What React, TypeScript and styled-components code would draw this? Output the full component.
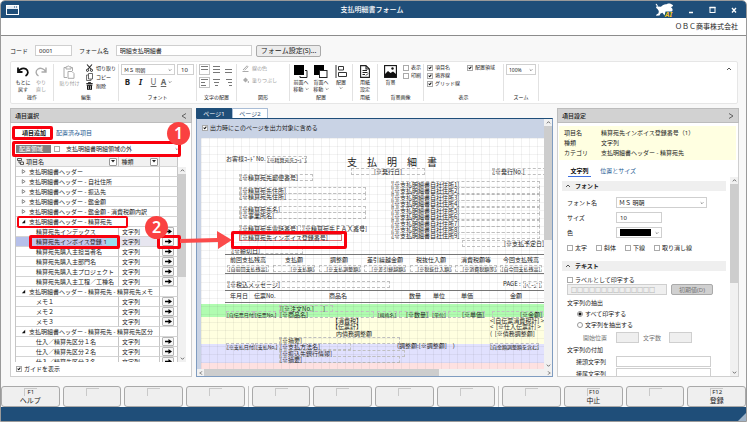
import React from "react";
import styled, { createGlobalStyle, css } from "styled-components";

const GlobalStyle = createGlobalStyle`
  *, *::before, *::after { box-sizing: border-box; }
  html, body { margin: 0; }
  body, button, input, select, table {
    font-family: "Noto Sans", "Noto Sans CJK JP", sans-serif;
    font-size: 6px;
    line-height: 8px;
    color: #222;
  }
  button, input, select { margin: 0; padding: 0; }
`;

/* ---------- window frame ---------- */

const Window = styled.div`
  position: relative;
  display: flex;
  flex-direction: column;
  height: 100vh;
  overflow: hidden;
  border: 1px solid #9a9a9a;
  border-radius: 5px 5px 0 0;
  background: #f8f8f8;
  white-space: nowrap;
`;

const TitleBar = styled.header`
  display: grid;
  grid-template-columns: 1fr auto 1fr;
  align-items: center;
  flex: none;
  height: 17px;
  padding: 0 8px 0 5px;
  background: #1f4e79;
  color: #fff;
`;

const Title = styled.h1`
  margin: 0;
  font-size: 7px;
  line-height: 10px;
  font-weight: 500;
`;

const WindowButtons = styled.div`
  display: flex;
  align-items: center;
  justify-content: flex-end;
  gap: 13px;
`;

const WindowButton = styled.button`
  display: flex;
  width: 8px;
  height: 8px;
  border: 0;
  background: none;
`;

const CompanyBar = styled.div`
  flex: none;
  height: 18px;
  padding: 0 8px;
  border-bottom: 1px solid #8c8c8c;
  background: #fff;
  font-size: 7px;
  line-height: 17px;
  text-align: right;
`;

const Footer = styled.footer`
  display: flex;
  align-items: flex-end;
  justify-content: flex-end;
  flex: none;
  height: 14px;
  background: #1f4e79;
`;

/* ---------- shared controls ---------- */

const TextInput = styled.input<{ $w?: number }>`
  width: ${(p) => (p.$w ? `${p.$w}px` : "100%")};
  height: 11px;
  padding: 0 3px;
  border: 1px solid #cfcfcf;
  background: #fff;
  &:disabled {
    background: #efefef;
    color: #777;
  }
`;

const SelectBox = styled.span<{ $w: number; $small?: boolean }>`
  display: grid;
  align-items: center;
  width: ${(p) => p.$w}px;
  height: 11px;
  border: 1px solid #cfcfcf;
  background: #fff;
  > select {
    grid-area: 1 / 1;
    width: 100%;
    height: 9px;
    padding: 0 2px;
    border: 0;
    appearance: none;
    background: transparent;
    font-size: ${(p) => (p.$small ? 5 : 6)}px;
  }
  > svg {
    grid-area: 1 / 1;
    justify-self: end;
    margin-right: 2px;
    pointer-events: none;
  }
`;

const Check = styled.label<{ $small?: boolean }>`
  display: inline-flex;
  align-items: center;
  gap: 2px;
  font-size: ${(p) => (p.$small ? 5 : 6)}px;
`;

const Tick = styled.input.attrs({ type: "checkbox" })`
  position: relative;
  flex: none;
  width: 6px;
  height: 6px;
  appearance: none;
  border: 1px solid #aaa;
  background: #fff;
  &:checked::after {
    content: "";
    position: absolute;
    left: 1px;
    top: 0;
    width: 2px;
    height: 3px;
    border: solid #111;
    border-width: 0 1px 1px 0;
    transform: rotate(40deg);
  }
`;

const Radio = styled.input.attrs({ type: "radio" })`
  flex: none;
  width: 6px;
  height: 6px;
  appearance: none;
  border: 1px solid #999;
  border-radius: 50%;
  background: #fff;
  &:checked {
    background: radial-gradient(circle, #111 1px, #fff 2px);
  }
`;

const Chevron = ({ up, size = 4 }: { up?: boolean; size?: number }) => (
  <svg width={size} height={size} viewBox="0 0 6 6" aria-hidden="true">
    <path d={up ? "M1 4L3 2L5 4" : "M1 2L3 4L5 2"} fill="none" stroke="#555" strokeWidth="1" />
  </svg>
);

/* ---------- form name row ---------- */

const FormRow = styled.div`
  display: flex;
  align-items: center;
  flex: none;
  height: 24px;
  padding: 5px 9px 0;
  gap: 7px;
`;

const FormButton = styled.button`
  height: 12px;
  padding: 0 4px;
  margin-left: -3px;
  border: 1px solid #aaa;
  border-radius: 2px;
  background: #ececec;
  font-size: 7px;
`;

/* ---------- ribbon ---------- */

const Ribbon = styled.div`
  display: flex;
  flex: none;
  height: 43px;
  margin: 1px 8px 0 9px;
  padding: 2px 0;
  border: 1px solid #e6e6e6;
  border-radius: 2px;
  background: #fff;
  font-size: 5px;
  line-height: 7px;
`;

const Group = styled.section<{ $w: number }>`
  display: flex;
  flex-direction: column;
  flex: none;
  width: ${(p) => p.$w}px;
  border-right: 1px solid #e2e2e2;
`;

const GroupBody = styled.div<{ $gap?: number; $pad?: number }>`
  display: flex;
  flex: 1;
  min-height: 0;
  gap: ${(p) => p.$gap ?? 0}px;
  padding: 0 ${(p) => p.$pad ?? 2}px;
  font-size: 5px;
`;

const GroupName = styled.div`
  flex: none;
  height: 8px;
  text-align: center;
  line-height: 8px;
`;

const BigButton = styled.button`
  display: flex;
  flex-direction: column;
  align-items: center;
  flex: 1;
  padding-top: 1px;
  border: 0;
  background: none;
  font-size: 5px;
  line-height: 7px;
  &:disabled { color: #999; }
  > svg { flex: none; margin-bottom: 1px; }
`;

const Stack = styled.div<{ $gap?: number; $pad?: number }>`
  display: flex;
  flex-direction: column;
  align-items: flex-start;
  gap: ${(p) => p.$gap ?? 2}px;
  padding-top: ${(p) => p.$pad ?? 0}px;
`;

const Line = styled.div<{ $gap?: number }>`
  display: flex;
  align-items: center;
  gap: ${(p) => p.$gap ?? 2}px;
`;

const SmallButton = styled.button<{ $boxed?: boolean }>`
  display: flex;
  align-items: center;
  gap: 3px;
  border: ${(p) => (p.$boxed ? "1px solid #c4c4c4" : "0")};
  background: none;
  font-size: 5px;
  line-height: 7px;
  &:disabled { color: #999; }
`;

const FontButton = styled.button`
  display: flex;
  align-items: center;
  justify-content: center;
  gap: 2px;
  width: 13px;
  border: 0;
  background: none;
  font-size: 8px;
  line-height: 10px;
  > i { font-weight: 700; }
  > u { color: #666; }
`;

const AlignButton = styled.button<{ $on?: boolean }>`
  display: flex;
  align-items: center;
  justify-content: center;
  width: 11px;
  height: 11px;
  border: 1px solid ${(p) => (p.$on ? "#c4c4c4" : "transparent")};
  background: none;
`;

const CollapseButton = styled.button`
  display: flex;
  margin: 2px 5px 0 auto;
  height: 6px;
  border: 0;
  background: none;
`;

const AlignIcon = ({ rows }: { rows: [number, number][] }) => (
  <svg width="9" height="9" viewBox="0 0 9 9" aria-hidden="true">
    {rows.map(([x, w], i) => (
      <rect key={i} x={x} y={1 + i * 3} width={w} height="1" fill="#777" />
    ))}
  </svg>
);

/* ---------- main area ---------- */

const Main = styled.main`
  display: flex;
  flex: 1;
  min-height: 0;
  gap: 4px;
  padding: 4px 7px 9px 9px;
`;

const Panel = styled.section`
  display: flex;
  flex-direction: column;
  flex: none;
  width: 182px;
  min-height: 0;
  border: 1px solid #cfcfcf;
  background: #fff;
`;

const PanelHeader = styled.h2`
  display: flex;
  align-items: center;
  justify-content: space-between;
  flex: none;
  height: 15px;
  margin: -1px -1px 0;
  padding: 0 4px;
  border: 1px solid #bcbcbc;
  background: #d2d2d2;
  font-size: 6px;
  font-weight: 500;
`;

const TabRow = styled.nav`
  display: flex;
  flex: none;
  gap: 8px;
  padding: 5px 10px 0;
`;

const TextTab = styled.button<{ $on?: boolean }>`
  height: 11px;
  padding: 0 1px;
  border: 0;
  border-bottom: 1px solid ${(p) => (p.$on ? "#3d6fe0" : "transparent")};
  background: none;
  color: ${(p) => (p.$on ? "#111" : "#1f5c94")};
  font-weight: ${(p) => (p.$on ? 700 : 400)};
`;

const AreaRow = styled.div`
  display: flex;
  align-items: center;
  flex: none;
  gap: 3px;
  height: 9px;
  margin: 5px 12px 3px 5px;
`;

const AreaTag = styled.label`
  width: 35px;
  padding: 0 3px;
  background: #808080;
  color: #fff;
`;

const AreaSelect = styled.span`
  display: grid;
  align-items: center;
  flex: 1;
  > select {
    grid-area: 1 / 1;
    border: 0;
    padding-left: 3px;
    appearance: none;
    background: none;
  }
  > svg { grid-area: 1 / 1; justify-self: end; pointer-events: none; }
`;

const ListArea = styled.div`
  display: flex;
  flex: 1;
  min-height: 0;
  margin: 0 5px 0 4px;
`;

const ListClip = styled.div`
  flex: 1;
  min-width: 0;
  overflow: hidden;
`;

const ListScroll = styled.div`
  display: flex;
  padding-top: 11px;
`;

const ItemTable = styled.table`
  width: 100%;
  table-layout: fixed;
  border-collapse: separate;
  border-spacing: 0;
  border-left: 1px solid #c6c6c6;
  th, td {
    height: 10px;
    padding: 0;
    overflow: hidden;
    border-right: 1px solid #c6c6c6;
    border-bottom: 1px solid #d4d4d4;
    text-align: left;
    font-weight: 400;
    line-height: 8px;
  }
  th { border-top: 1px solid #c6c6c6; height: 11px; background: #f1f1f1; }
`;

const HeadCell = styled.div`
  display: flex;
  align-items: center;
  gap: 2px;
  padding: 0 1px;
`;

const FilterButton = styled.button`
  display: flex;
  align-items: center;
  justify-content: center;
  width: 8px;
  height: 8px;
  margin-left: auto;
  border: 1px solid #999;
  border-radius: 1px;
  background: #fff;
`;

const GroupCell = styled.td`
  > span { display: flex; align-items: center; gap: 3px; padding-left: 5px; }
`;

const NameCell = styled.td<{ $on?: boolean }>`
  && {
    padding-left: 20px;
    ${(p) => p.$on && css`background: linear-gradient(90deg, #b6c0ea 0 15px, #c3c5ea 15px 90px, #98def0 90px);`}
  }
`;

const TypeCell = styled.td<{ $on?: boolean }>`
  && {
    padding-left: 3px;
    ${(p) => p.$on && css`background: #e7e6f0;`}
  }
`;

const PlaceButton = styled.button`
  display: flex;
  align-items: center;
  justify-content: center;
  width: 12px;
  height: 9px;
  margin-left: 2px;
  border: 1px solid #b5b5b5;
  border-radius: 1px;
  background: #f6f6f6;
`;

const ScrollTrack = styled.div<{ $across?: boolean }>`
  display: flex;
  flex: none;
  flex-direction: ${(p) => (p.$across ? "row" : "column")};
  align-items: center;
  ${(p) => (p.$across ? "height: 7px;" : "width: 8px;")}
  background: #f1f1f1;
`;

const ScrollThumb = styled.div<{ $across?: boolean; $share: number }>`
  ${(p) => (p.$across ? "height: 100%;" : "width: 100%;")}
  flex: ${(p) => p.$share} 1 0;
  background: #cdcdcd;
`;

const ScrollRest = styled.div<{ $share: number }>`
  flex: ${(p) => p.$share} 1 0;
`;

const ScrollEnd = styled.span`
  display: flex;
  align-items: center;
  justify-content: center;
  flex: none;
  width: 7px;
  height: 7px;
`;

const SideArrow = ({ right, size = 4 }: { right?: boolean; size?: number }) => (
  <svg width={size} height={size} viewBox="0 0 6 6" aria-hidden="true">
    <path d={right ? "M1 0.5L5 3L1 5.5" : "M5 0.5L1 3L5 5.5"} fill="none" stroke="#555" strokeWidth="0.9" />
  </svg>
);

const ScrollBar = ({ across, share, rest }: { across?: boolean; share: number; rest: number }) => (
  <ScrollTrack $across={across}>
    <ScrollEnd>{across ? <SideArrow /> : <Chevron up size={5} />}</ScrollEnd>
    <ScrollThumb $across={across} $share={share} />
    <ScrollRest $share={rest} />
    <ScrollEnd>{across ? <SideArrow right /> : <Chevron size={5} />}</ScrollEnd>
  </ScrollTrack>
);

const GuideRow = styled.div`
  flex: none;
  height: 14px;
  padding: 3px 5px;
`;

/* ---------- page designer ---------- */

const Designer = styled.section`
  display: flex;
  flex: 1;
  flex-direction: column;
  min-width: 0;
`;

const PageTabs = styled.nav`
  display: flex;
  flex: none;
`;

const PageTab = styled.button<{ $on?: boolean }>`
  width: 36px;
  height: 10px;
  border: 1px solid ${(p) => (p.$on ? "#1f4e79" : "#a9bdd6")};
  border-bottom: 0;
  border-radius: 1px 1px 0 0;
  background: ${(p) => (p.$on ? "#1f4e79" : "#fff")};
  color: ${(p) => (p.$on ? "#fff" : "#1f4e79")};
`;

const DesignFrame = styled.div`
  display: flex;
  flex: 1;
  flex-direction: column;
  min-height: 0;
  border: 1px solid #7f9cc0;
  border-top-color: #1f4e79;
  background: #c9d3e5;
`;

const DesignRow = styled.div`
  display: flex;
  flex: 1;
  min-height: 0;
`;

const DesignView = styled.div`
  display: flex;
  flex: 1;
  flex-direction: column;
  min-width: 0;
  padding-left: 4px;
  overflow: hidden;
`;

const OutputRow = styled.div`
  flex: none;
  height: 19px;
  padding: 5px 1px;
`;

const Paper = styled.div`
  position: relative;
  flex: 1;
  min-height: 0;
  overflow: hidden;
  background: #fff;
  font-size: 5px;
  &::after {
    content: "";
    position: absolute;
    inset: 0;
    background-image:
      linear-gradient(90deg, rgba(90, 90, 90, 0.08) 1px, transparent 1px),
      linear-gradient(rgba(90, 90, 90, 0.08) 1px, transparent 1px);
    background-size: 8px 8px;
    pointer-events: none;
  }
`;

const Zone = styled.div<{ $y: number; $h: number; $c: string }>`
  position: absolute;
  left: 0;
  right: 0;
  top: ${(p) => p.$y}px;
  height: ${(p) => p.$h}px;
  background: ${(p) => p.$c};
`;

const Rule = styled.div<{ $y: number }>`
  position: absolute;
  left: 24px;
  right: 0;
  top: ${(p) => p.$y}px;
  height: 1px;
  background: #777;
`;

type FieldProps = { $x: number; $y: number; $w: number; $box?: boolean; $at?: string; $s?: number };

const Field = styled.div<FieldProps>`
  position: absolute;
  display: flex;
  align-items: center;
  justify-content: ${(p) => p.$at ?? "flex-start"};
  left: ${(p) => p.$x}px;
  top: ${(p) => p.$y - (p.$box ? 3 : 4)}px;
  width: ${(p) => p.$w}px;
  height: ${(p) => (p.$box ? 7 : 8)}px;
  border: ${(p) => (p.$box ? "1px dashed #c0c0c0" : "0")};
  font-family: "Noto Sans CJK JP", sans-serif;
  font-size: ${(p) => p.$s ?? 6}px;
  line-height: 6px;
  white-space: pre;
`;

const Selected = styled(Field)`
  border: 1px solid #e07070;
`;

/* x, centre y, width, text, boxed, alignment, size */
type Item = [number, number, number, string, boolean?, string?, number?];

const items: Item[] = [
  [25, 21, 42, "お客様ｺｰﾄﾞNo.", false, "flex-start", 6],
  [66, 21, 40, "[※精算宛先ｺｰﾄﾞ]", true, "center", 5],
  [146, 24, 100, "支　払　明　細　書", false, "flex-start", 10],
  [150, 33, 74, "[※発行日]", true, "center"],
  [291, 33, 54, "[※発行No.]", true],
  [38, 39, 74, "[※精算宛先郵便番号]", true],
  [38, 52, 127, "[※精算宛先住所]", true],
  [38, 58, 127, "[※精算宛先住所]", true],
  [38, 71, 127, "[※精算宛先名]", true],
  [38, 77, 127, "[※事業所名]", true],
  [38, 90, 62, "[※精算宛先電話番号]", true],
  [101, 90, 62, "[※精算宛先ＦＡＸ番号]", true],
  [30, 112, 72, "[※締切日]", true],
  ...[46, 52, 59, 65, 72, 78, 85, 91, 97].map(
    (y, i): Item => [190, y, 149, `[※支払明細書自社住所${i + 1}]`, true],
  ),
  [261, 105, 83, "[※支払予定日]", true, "flex-end"],
  [24, 122, 46, "前回支払残高", false, "center"],
  [72, 122, 42, "支払額", false, "center"],
  [117, 122, 42, "調整額", false, "center"],
  [163, 122, 42, "差引繰越金額", false, "center"],
  [208, 122, 44, "税抜仕入額", false, "center"],
  [254, 122, 42, "消費税額等", false, "center"],
  [299, 122, 42, "今回支払残高", false, "center"],
  [26, 130, 42, "[自前回支払残高]", true, "center", 5],
  [72, 130, 42, "[※支払額]", true, "flex-end", 5],
  [118, 130, 42, "[※支払調整額]", true, "flex-end", 5],
  [163, 130, 42, "[※差引繰越額]", true, "flex-end", 5],
  [209, 130, 42, "[※税抜仕入額]", true, "flex-end", 5],
  [254, 130, 42, "[※消費税額等]", true, "flex-end", 5],
  [299, 130, 42, "[自今回支払残高]", true, "center", 5],
  [26, 146, 163, "[※税込メッセージ]", true],
  [302, 146, 20, "PAGE :"],
  [322, 146, 19, "[ﾍﾟｰｼﾞ]", true, "center", 5],
  [29, 158, 20, "年月日"],
  [53, 158, 22, "伝票No."],
  [128, 158, 20, "商品名"],
  [208, 158, 14, "数量"],
  [232, 158, 14, "単位"],
  [260, 158, 14, "単価"],
  [309, 158, 14, "金額"],
  [78, 170, 54, "[[※注文No.]       ]", true],
  [25, 176, 28, "[自伝票日付]", true, "flex-start", 5],
  [53, 176, 22, "[伝票No.]", true, "flex-start", 5],
  [78, 176, 95, "[※商品名]", true],
  [176, 176, 20, "[規格名]", true, "center", 5],
  [198, 176, 30, "[※数量]", true, "flex-end"],
  [231, 176, 14, "[単位]", true, "center", 5],
  [247, 176, 37, "[※単価]", true, "flex-end"],
  [291, 176, 51, "[※金額]", true, "flex-end"],
  [131, 183, 30, "【消費税】"],
  [131, 189, 30, "【伝票計】"],
  [135, 196, 40, "内債務調整額"],
  [289, 183, 54, "<[自伝票消費税計] >", false, "flex-start"],
  [289, 189, 54, "<  [※仕入伝票計] >", false, "flex-start"],
  [289, 196, 54, "(  [※債務調整額]", false, "flex-start"],
  [78, 202, 121, "[※摘要]", true],
  [25, 208, 28, "[※支払日付]", true, "flex-start", 5],
  [54, 208, 22, "[支払No.]", true, "flex-start", 5],
  [78, 208, 72, "[※支払方法名]", true],
  [196, 208, 62, "(調整額:[※調整額]　)"],
  [289, 208, 49, "[自金額調整額を含む]", true, "center", 5],
  [78, 215, 126, "[※振込先銀行情報]", true],
  [78, 221, 121, "[※摘要]", true],
];

/* ---------- property panel ---------- */

const InfoList = styled.dl`
  display: grid;
  grid-template-columns: 37px 1fr;
  flex: none;
  row-gap: 2px;
  margin: 3px 2px 1px 1px;
  padding: 3px 5px;
  background: #ffffe1;
  dt, dd { margin: 0; }
`;

const PropertyBody = styled.div`
  display: flex;
  flex: 1;
  min-height: 0;
`;

const PropertyScroll = styled.div`
  flex: 1;
  min-width: 0;
  padding: 4px 4px 0;
  overflow: hidden;
`;

const SectionTitle = styled.h3<{ $after?: boolean }>`
  display: flex;
  align-items: center;
  gap: 4px;
  height: 10px;
  margin: ${(p) => (p.$after ? 6 : 0)}px 0 4px;
  padding: 0 3px;
  background: #efefef;
  font-size: 6px;
  font-weight: 700;
`;

const PropertyRow = styled.div<{ $h?: number; $in?: number; $muted?: boolean }>`
  display: flex;
  align-items: center;
  height: ${(p) => p.$h ?? 15}px;
  padding-left: ${(p) => p.$in ?? 5}px;
  gap: 4px;
  ${(p) => p.$muted && "color: #777;"}
`;

const PropertyLabel = styled.label<{ $w: number }>`
  width: ${(p) => p.$w}px;
`;

const CheckRow = styled(PropertyRow)`
  gap: 9px;
`;

const ColorButton = styled.button`
  display: flex;
  align-items: center;
  justify-content: space-between;
  width: 46px;
  height: 11px;
  padding: 0 2px 0 3px;
  border: 1px solid #cfcfcf;
  background: #fff;
`;

const Swatch = styled.span`
  width: 31px;
  height: 7px;
  background: #000;
`;

const DefaultButton = styled.button`
  width: 42px;
  height: 11px;
  border: 1px solid #aaa;
  border-radius: 2px;
  background: #d0d0d0;
  color: #777;
`;

/* ---------- function keys ---------- */

const KeyBar = styled.div`
  display: flex;
  flex: none;
  gap: 3px;
  height: 21px;
`;

const KeyDivider = styled.span`
  width: 1px;
  background: #c4c4c4;
`;

const KeyButton = styled.button`
  display: flex;
  flex: 1 1 0;
  flex-direction: column;
  align-items: center;
  padding-top: 1px;
  border: 1px solid #a9a9a9;
  border-radius: 3px;
  background: #efefef;
  font-size: 7px;
  line-height: 10px;
`;

const KeyCode = styled.span`
  width: 13px;
  height: 8px;
  border: solid #c9c9c9;
  border-width: 1px 0 0 1px;
  font-size: 6px;
  line-height: 7px;
`;

/* ---------- callouts ---------- */

const Callout = styled.div<{ $x: number; $y: number; $w: number; $h: number; $b?: number }>`
  position: absolute;
  left: ${(p) => p.$x}px;
  top: ${(p) => p.$y}px;
  width: ${(p) => p.$w}px;
  height: ${(p) => p.$h}px;
  border: ${(p) => p.$b ?? 3}px solid #f9000d;
  border-radius: 2px;
  pointer-events: none;
`;

const Badge = styled.div<{ $x: number; $y: number }>`
  position: absolute;
  left: ${(p) => p.$x}px;
  top: ${(p) => p.$y}px;
  width: 23px;
  height: 23px;
  border-radius: 50%;
  background: #fa4141;
  color: #fff;
  font-family: "Noto Sans", sans-serif;
  font-size: 16px;
  font-weight: 600;
  line-height: 23px;
  text-align: center;
  pointer-events: none;
`;

const PointerArrow = styled.svg`
  position: absolute;
  left: 179px;
  top: 228px;
  pointer-events: none;
`;

/* ---------- data ---------- */

type Row = { group?: boolean; open?: boolean; name: string; on?: boolean };

const rows: Row[] = [
  { group: true, name: "支払明細書ヘッダー" },
  { group: true, name: "支払明細書ヘッダー - 自社住所" },
  { group: true, name: "支払明細書ヘッダー - 振込先" },
  { group: true, name: "支払明細書ヘッダー - 鑑金額" },
  { group: true, name: "支払明細書ヘッダー - 鑑金額 - 消費税額内訳" },
  { group: true, open: true, name: "支払明細書ヘッダー - 精算宛先" },
  { name: "精算宛先インデックス" },
  { name: "精算宛先インボイス登録  1", on: true },
  { name: "精算宛先購入主担当者名" },
  { name: "精算宛先購入主部門名" },
  { name: "精算宛先購入主プロジェクト" },
  { name: "精算宛先購入主工程／工種名" },
  { group: true, open: true, name: "支払明細書ヘッダー - 精算宛先 - 精算宛先メモ" },
  { name: "メモ１" },
  { name: "メモ２" },
  { name: "メモ３" },
  { group: true, open: true, name: "支払明細書ヘッダー - 精算宛先 - 精算宛先区分" },
  { name: "仕入／精算先区分１名" },
  { name: "仕入／精算先区分２名" },
  { name: "仕入／精算先区分３名" },
];

const keyGroups: { code?: string; name?: string }[][] = [
  [{ code: "F1", name: "ヘルプ" }, {}, {}, {}],
  [{}, {}, {}, {}],
  [{}, { code: "F10", name: "中止" }, {}, { code: "F12", name: "登録" }],
];

const Expander = ({ open }: { open?: boolean }) => (
  <svg width="5" height="5" viewBox="0 0 6 6" aria-hidden="true">
    {open ? <path d="M5 1V5H1Z" fill="#111" /> : <path d="M1.5 0.8L5 3L1.5 5.2Z" fill="#fff" stroke="#666" strokeWidth="0.9" />}
  </svg>
);

const DownTriangle = () => (
  <svg width="4" height="3" viewBox="0 0 4 3" aria-hidden="true"><path d="M0 0H4L2 2.5Z" fill="#222" /></svg>
);

/* ---------- sections ---------- */

const RibbonBar = () => (
  <Ribbon>
    <Group $w={43}>
      <GroupBody $pad={3}>
        <BigButton>
          <svg width="14" height="13" viewBox="0 0 14 13"><path d="M2 2.5V7H6.5M2.2 6.8C4 3.5 7.5 2.5 10 4C13 6 12.2 9.5 9.5 11" fill="none" stroke="#111" strokeWidth="1.8" /></svg>
          <span>もとに<br />戻す</span>
        </BigButton>
        <BigButton disabled>
          <svg width="14" height="13" viewBox="0 0 14 13"><path d="M12 2.5V7H7.5M11.8 6.8C10 3.5 6.5 2.5 4 4C1 6 1.8 9.5 4.5 11" fill="none" stroke="#aaa" strokeWidth="1.4" /></svg>
          <span>やり<br />直し</span>
        </BigButton>
      </GroupBody>
      <GroupName>操作</GroupName>
    </Group>

    <Group $w={65}>
      <GroupBody $gap={3}>
        <BigButton disabled>
          <svg width="12" height="14" viewBox="0 0 12 14"><path d="M4 12.5H1V2.5H3M8 2.5H9.5V6M3 4V1.8H4.5L5.3 .7L6.2 1.8H8V4ZM5 6.5H9L11 8.5V13.3H5Z" fill="none" stroke="#aaa" strokeWidth="1" /></svg>
          貼り付け
        </BigButton>
        <Stack $gap={1}>
          <SmallButton>
            <svg width="7" height="8" viewBox="0 0 7 8"><path d="M1 .5L5 5M6 .5L2 5" stroke="#222" strokeWidth="1.1" /><circle cx="1.5" cy="6.3" r="1.1" fill="none" stroke="#222" /><circle cx="5.5" cy="6.3" r="1.1" fill="none" stroke="#222" /></svg>
            切り取り
          </SmallButton>
          <SmallButton>
            <svg width="7" height="8" viewBox="0 0 7 8"><path d="M2.5 .5H6.5V6H2.5ZM2.5 2H.6V7.5H5V6" fill="none" stroke="#444" strokeWidth=".8" /></svg>
            コピー
          </SmallButton>
          <SmallButton>
            <svg width="7" height="8" viewBox="0 0 7 8"><path d="M.3 1.5H6.7M2.5 1V.4H4.5V1M.5 3H6.5" fill="none" stroke="#111" strokeWidth=".9" /><path d="M1 3.3H6V7.8H1Z" fill="#111" /><path d="M2.5 4V7M4.5 4V7" stroke="#fff" strokeWidth=".6" /></svg>
            削除
          </SmallButton>
        </Stack>
      </GroupBody>
      <GroupName>編集</GroupName>
    </Group>

    <Group $w={78}>
      <GroupBody>
        <Stack $gap={2}>
          <Line>
            <SelectBox $w={54} $small>
              <select aria-label="フォント" defaultValue="m"><option value="m">ＭＳ 明朝</option></select>
              <Chevron />
            </SelectBox>
            <TextInput $w={17} aria-label="フォントサイズ" defaultValue="10" />
          </Line>
          <Line $gap={0}>
            <FontButton><b>B</b></FontButton>
            <FontButton><i>I</i></FontButton>
            <FontButton><u>U</u></FontButton>
            <FontButton><u><b>A</b></u><Chevron /></FontButton>
          </Line>
        </Stack>
      </GroupBody>
      <GroupName>フォント</GroupName>
    </Group>

    <Group $w={40}>
      <GroupBody $pad={2}>
        <Stack $gap={2}>
          <Line $gap={1}>
            <AlignButton $on aria-label="上揃え"><AlignIcon rows={[[1, 7], [1, 7]]} /></AlignButton>
            <AlignButton aria-label="上下中央"><AlignIcon rows={[[1, 7], [1, 7], [1, 7]]} /></AlignButton>
            <AlignButton aria-label="下揃え"><AlignIcon rows={[[0, 0], [1, 7], [1, 7]]} /></AlignButton>
          </Line>
          <Line $gap={1}>
            <AlignButton $on aria-label="左揃え"><AlignIcon rows={[[1, 7], [1, 4], [1, 5]]} /></AlignButton>
            <AlignButton aria-label="中央揃え"><AlignIcon rows={[[1, 7], [2, 5], [3, 3]]} /></AlignButton>
            <AlignButton aria-label="右揃え"><AlignIcon rows={[[2, 6], [4, 4], [5, 3]]} /></AlignButton>
          </Line>
        </Stack>
      </GroupBody>
      <GroupName>文字の配置</GroupName>
    </Group>

    <Group $w={53}>
      <GroupBody $pad={5}>
        <Stack $gap={5} $pad={1}>
          <SmallButton disabled>
            <svg width="7" height="7" viewBox="0 0 7 7"><path d="M1 5L5 .8L6 1.8L2.5 5.3M.5 6.5H6.5" fill="none" stroke="#aaa" /></svg>
            線の色
          </SmallButton>
          <SmallButton disabled>
            <svg width="7" height="7" viewBox="0 0 7 7"><path d="M3.5 .5L6 3L3.5 5.5L1 3Z" fill="#aaa" /><path d="M6.3 4V6" stroke="#aaa" /></svg>
            塗りつぶし
          </SmallButton>
        </Stack>
      </GroupBody>
      <GroupName>図形</GroupName>
    </Group>

    <Group $w={63}>
      <GroupBody $pad={1}>
        <BigButton>
          <svg width="14" height="13" viewBox="0 0 14 13"><path d="M11 5.5H13V12.5H6V11" fill="none" stroke="#222" /><rect x="0" y="0" width="10" height="10" fill="#000" /></svg>
          <span>前面へ<br />移動 <Chevron /></span>
        </BigButton>
        <BigButton>
          <svg width="14" height="13" viewBox="0 0 14 13"><rect x="0" y="0" width="10" height="10" fill="#000" /><rect x="5.5" y="5.5" width="7.5" height="7" fill="#fff" stroke="#222" /></svg>
          <span>背面へ<br />移動 <Chevron /></span>
        </BigButton>
        <BigButton>
          <svg width="12" height="13" viewBox="0 0 12 13"><path d="M1 0V13M3.5 1.5H8.5V5H3.5ZM3.5 7.5H11.5V11.5H3.5Z" fill="none" stroke="#333" /></svg>
          <span>配置</span><Chevron />
        </BigButton>
      </GroupBody>
      <GroupName>配置</GroupName>
    </Group>

    <Group $w={25}>
      <GroupBody>
        <BigButton>
          <svg width="10" height="13" viewBox="0 0 10 13"><path d="M.6 .6H6L9.4 4V12.4H.6ZM6 .6V4H9.4" fill="none" stroke="#222" strokeWidth="1.1" /><path d="M2.5 5.5H7M2.5 7.5H7.5M2.5 9.5H5M6 10.5L8 8.5" stroke="#222" /></svg>
          <span>用紙<br />設定</span>
        </BigButton>
      </GroupBody>
      <GroupName>用紙</GroupName>
    </Group>

    <Group $w={46}>
      <GroupBody $gap={2}>
        <BigButton>
          <svg width="13" height="13" viewBox="0 0 13 13"><rect x=".6" y=".6" width="11.8" height="11.8" fill="#fff" stroke="#111" strokeWidth="1.1" /><path d="M1 9L4 6L6.5 8L9 6.5L12 9V12H1Z" fill="#111" /><circle cx="8.5" cy="3.5" r="1.2" fill="#111" /></svg>
          背景
        </BigButton>
        <Stack $gap={1}>
          <Check $small><Tick />表示</Check>
          <Check $small><Tick />印刷</Check>
        </Stack>
      </GroupBody>
      <GroupName>背景画像</GroupName>
    </Group>

    <Group $w={80}>
      <GroupBody $gap={7} $pad={3}>
        <Stack $gap={1}>
          <Check $small><Tick defaultChecked />項目名</Check>
          <Check $small><Tick defaultChecked />境界線</Check>
          <Check $small><Tick defaultChecked />グリッド線</Check>
        </Stack>
        <Stack>
          <Check $small><Tick defaultChecked />配置領域</Check>
        </Stack>
      </GroupBody>
      <GroupName>表示</GroupName>
    </Group>

    <Group $w={35}>
      <GroupBody>
        <SelectBox $w={30} $small>
          <select aria-label="ズーム" defaultValue="100"><option value="100">100%</option></select>
          <Chevron />
        </SelectBox>
      </GroupBody>
      <GroupName>ズーム</GroupName>
    </Group>
    <CollapseButton aria-label="リボンを折りたたむ"><Chevron up size={6} /></CollapseButton>
  </Ribbon>
);

const ItemPanel = () => (
  <Panel>
    <PanelHeader>項目選択<SideArrow size={6} /></PanelHeader>
    <TabRow>
      <TextTab $on>項目追加</TextTab>
      <TextTab>配置済み項目</TextTab>
    </TabRow>
    <AreaRow>
      <AreaTag htmlFor="area">配置領域</AreaTag>
      <Tick aria-label="領域" />
      <AreaSelect>
        <select id="area" defaultValue="o"><option value="o">支払明細書明細領域の外</option></select>
        <Chevron />
      </AreaSelect>
    </AreaRow>
    <ListArea>
      <ListClip>
        <ItemTable>
          <colgroup><col /><col width="41" /><col width="18" /></colgroup>
          <thead>
            <tr>
              <th><HeadCell>
                <svg width="7" height="7" viewBox="0 0 7 7"><path d="M.5 .5H4.5V2.5H.5ZM2 2.5V5H3M3.5 4H6.5V6.5H3.5Z" fill="none" stroke="#333" strokeWidth=".8" /></svg>
                項目名<FilterButton aria-label="項目名で絞り込む"><DownTriangle /></FilterButton>
              </HeadCell></th>
              <th><HeadCell>&nbsp;種類<FilterButton aria-label="種類で絞り込む"><DownTriangle /></FilterButton></HeadCell></th>
              <th />
            </tr>
          </thead>
          <tbody>
            {rows.map((r) =>
              r.group ? (
                <tr key={r.name}>
                  <GroupCell colSpan={2}><span><Expander open={r.open} />{r.name}</span></GroupCell>
                  <td />
                </tr>
              ) : (
                <tr key={r.name}>
                  <NameCell $on={r.on}>{r.name}</NameCell>
                  <TypeCell $on={r.on}>文字列</TypeCell>
                  <td>
                    <PlaceButton aria-label={`${r.name}を配置`}>
                      <svg width="7" height="5" viewBox="0 0 7 5"><path d="M0 1.7H3.5V0L7 2.5L3.5 5V3.3H0Z" fill="#000" /></svg>
                    </PlaceButton>
                  </td>
                </tr>
              ),
            )}
          </tbody>
        </ItemTable>
      </ListClip>
      <ListScroll><ScrollBar share={105} rest={80} /></ListScroll>
    </ListArea>
    <GuideRow><Check><Tick defaultChecked />ガイドを表示</Check></GuideRow>
  </Panel>
);

const PageDesigner = () => (
  <Designer>
    <PageTabs>
      <PageTab $on>ページ1</PageTab>
      <PageTab>ページ2</PageTab>
    </PageTabs>
    <DesignFrame>
      <DesignRow>
        <DesignView>
          <OutputRow><Check><Tick defaultChecked />出力時にこのページを出力対象に含める</Check></OutputRow>
          <Paper>
            <Zone $y={166} $h={13} $c="#b0fcb0" />
            <Zone $y={179} $h={27} $c="#ffffe0" />
            <Zone $y={206} $h={19} $c="#e1e1fe" />
            <Zone $y={225} $h={30} $c="#fee1e1" />
            {[116, 135, 152, 164].map((y) => <Rule key={y} $y={y} />)}
            {items.map(([x, y, w, text, box, at, s], i) => (
              <Field key={i} $x={x} $y={y} $w={w} $box={box} $at={at} $s={s}>{text}</Field>
            ))}
            <Selected $x={38} $y={99} $w={103} $box>[※精算宛先インボイス登録番号]</Selected>
          </Paper>
        </DesignView>
        <ScrollBar share={115} rest={124} />
      </DesignRow>
      <ScrollBar across share={235} rest={106} />
    </DesignFrame>
  </Designer>
);

const PropertyPanel = () => (
  <Panel>
    <PanelHeader>項目設定<SideArrow right size={6} /></PanelHeader>
    <InfoList>
      <dt>項目名</dt><dd>精算宛先インボイス登録番号（1）</dd>
      <dt>種類</dt><dd>文字列</dd>
      <dt>カテゴリ</dt><dd>支払明細書ヘッダー - 精算宛先</dd>
    </InfoList>
    <TabRow>
      <TextTab $on>&nbsp;文字列&nbsp;</TextTab>
      <TextTab>位置とサイズ</TextTab>
    </TabRow>
    <PropertyBody>
      <PropertyScroll>
        <SectionTitle><Chevron up size={6} />フォント</SectionTitle>
        <PropertyRow>
          <PropertyLabel $w={45} htmlFor="font">フォント名</PropertyLabel>
          <SelectBox $w={91}>
            <select id="font" defaultValue="m"><option value="m">ＭＳ 明朝</option></select>
            <Chevron />
          </SelectBox>
        </PropertyRow>
        <PropertyRow>
          <PropertyLabel $w={45} htmlFor="size">サイズ</PropertyLabel>
          <TextInput id="size" $w={46} defaultValue="10" />
        </PropertyRow>
        <PropertyRow>
          <PropertyLabel $w={45} htmlFor="color">色</PropertyLabel>
          <ColorButton id="color"><Swatch /><Chevron /></ColorButton>
        </PropertyRow>
        <CheckRow>
          <Check><Tick />太字</Check>
          <Check><Tick />斜体</Check>
          <Check><Tick />下線</Check>
          <Check><Tick />取り消し線</Check>
        </CheckRow>
        <SectionTitle $after><Chevron up size={6} />テキスト</SectionTitle>
        <PropertyRow $h={9}><Check><Tick />ラベルとして印字する</Check></PropertyRow>
        <PropertyRow $h={11}>
          <TextInput $w={100} aria-label="ラベル" disabled defaultValue="□□□□□□□□□□□□□□" />
          <DefaultButton disabled>初期値(D)</DefaultButton>
        </PropertyRow>
        <PropertyRow $h={15}>文字列の抽出</PropertyRow>
        <PropertyRow $h={8} $in={15}><Check><Radio name="pick" defaultChecked />すべて印字する</Check></PropertyRow>
        <PropertyRow $h={14} $in={15}><Check><Radio name="pick" />文字列を抽出する</Check></PropertyRow>
        <PropertyRow $h={11} $in={21} $muted>
          <PropertyLabel $w={29} htmlFor="start">開始位置</PropertyLabel>
          <TextInput id="start" $w={23} disabled />
          <PropertyLabel $w={22} htmlFor="count">文字数</PropertyLabel>
          <TextInput id="count" $w={23} disabled />
        </PropertyRow>
        <PropertyRow $h={14}>文字列の付加</PropertyRow>
        <PropertyRow $h={9} $in={14}>
          <PropertyLabel $w={36} htmlFor="prefix">接頭文字列</PropertyLabel>
          <TextInput id="prefix" $w={95} />
        </PropertyRow>
        <PropertyRow $h={15} $in={14}>
          <PropertyLabel $w={36} htmlFor="suffix">接尾文字列</PropertyLabel>
          <TextInput id="suffix" $w={95} />
        </PropertyRow>
      </PropertyScroll>
      <ScrollBar share={98} rest={85} />
    </PropertyBody>
  </Panel>
);

export default function App() {
  return (
    <Window>
      <GlobalStyle />
      <TitleBar>
        <svg width="13" height="10" viewBox="0 0 13 10"><rect x=".5" y=".5" width="12" height="9" fill="none" stroke="#fff" /><rect x="1" y="1" width="11" height="3" fill="#e6eef6" /><path d="M8 2H9M10 2H11" stroke="#1f4e79" strokeWidth="1" /></svg>
        <Title>支払明細書フォーム</Title>
        <WindowButtons>
          <svg width="20" height="14" viewBox="0 0 20 14">
            <path d="M.5 1L1.500 .8L2.800 2.500L2.500 3.500L6 3.800C7.500 2 9.500 1 11.500 1.300L13 .6C15 .3 16.500 1 17.800 2L18 3L16 4.200C17.800 5.500 18 7 17 8.500H10.500L9.500 12.500L7.500 9.800L5.500 10.500L4.500 12.500L1 12.800L1.500 11.500L3.500 10.300L3.800 8L2.500 6L1 4.800L1.800 3Z" fill="#fff" />
            <text x="10" y="13.500" fontFamily="Noto Sans" fontSize="7" fontWeight="700" fontStyle="italic" fill="#f5c21b">AI</text>
          </svg>
          <WindowButton aria-label="最小化"><svg width="8" height="8"><path d="M1 6.5H5" stroke="#fff" strokeWidth="1.5" /></svg></WindowButton>
          <WindowButton aria-label="最大化"><svg width="8" height="8"><rect x="1" y="1.5" width="5" height="5" fill="none" stroke="#fff" /><path d="M.5 1.5H6.5" stroke="#fff" strokeWidth="1.5" /></svg></WindowButton>
          <WindowButton aria-label="閉じる"><svg width="8" height="8"><path d="M2 2L6 6.5M6 2L2 6.5" stroke="#fff" strokeWidth="1.3" /></svg></WindowButton>
        </WindowButtons>
      </TitleBar>
      <CompanyBar>ＯＢＣ商事株式会社</CompanyBar>
      <FormRow>
        <label htmlFor="code">コード</label>
        <TextInput id="code" $w={37} defaultValue="0001" />
        <label htmlFor="name">フォーム名</label>
        <TextInput id="name" $w={136} defaultValue="明細支払明細書" />
        <FormButton>フォーム設定(S)...</FormButton>
      </FormRow>
      <RibbonBar />
      <Main>
        <ItemPanel />
        <PageDesigner />
        <PropertyPanel />
      </Main>
      <KeyBar>
        {keyGroups.map((group, g) => (
          <React.Fragment key={g}>
            {g > 0 && <KeyDivider />}
            {group.map((k, i) => (
              <KeyButton key={i}>
                <KeyCode>{k.code}</KeyCode>
                {k.name}
              </KeyButton>
            ))}
          </React.Fragment>
        ))}
      </KeyBar>
      <Footer>
        <svg width="8" height="8" viewBox="0 0 8 8"><path d="M8 0V8H0Z" fill="#9fb3c8" /></svg>
      </Footer>

      <Callout $x={11} $y={125} $w={41} $h={14} />
      <Callout $x={11} $y={140} $w={169} $h={16} />
      <Callout $x={16} $y={215} $w={111} $h={12} $b={2} />
      <Callout $x={28} $y={234} $w={91} $h={14} />
      <Callout $x={156} $y={234} $w={24} $h={14} />
      <Callout $x={230} $y={230} $w={116} $h={18} />
      <PointerArrow width="52" height="24" viewBox="0 0 52 24">
        <path d="M0 10L37 9V2L52 11L38 20V13L0 14Z" fill="#fb4b4b" />
      </PointerArrow>
      <Badge $x={166} $y={121}>1</Badge>
      <Badge $x={144} $y={215}>2</Badge>
    </Window>
  );
}
